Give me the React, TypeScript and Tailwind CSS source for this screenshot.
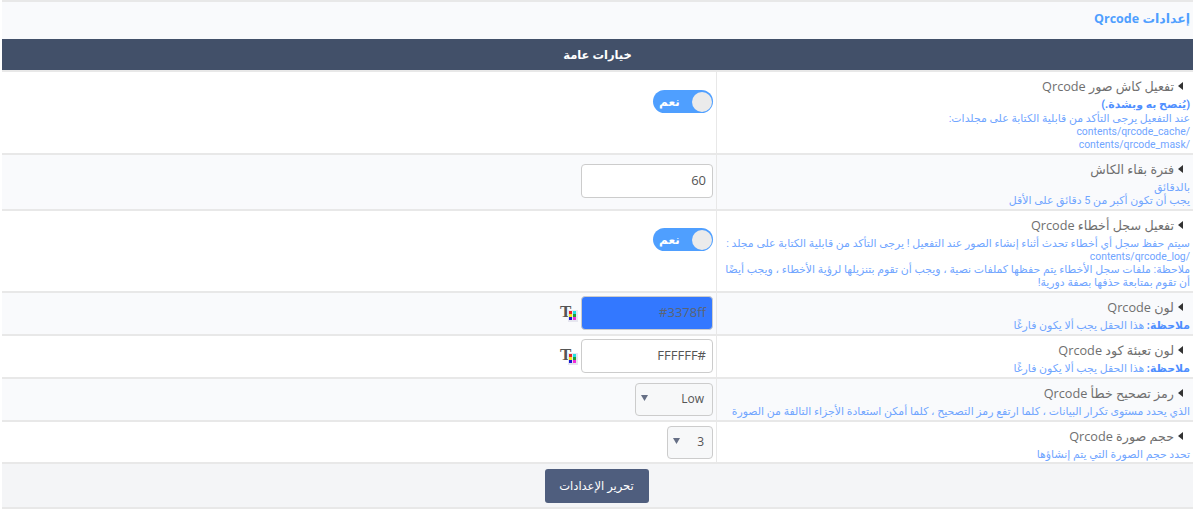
const font = { fontFamily: '"Open Sans", "DejaVu Sans", sans-serif' };
const descFont = { fontFamily: 'Roboto, "DejaVu Sans", sans-serif' };

function ColorIcon() {
  return (
    <div className="relative h-[17px] w-[18px] shrink-0" dir="ltr" aria-hidden="true">
      <span className="block font-['Liberation_Serif'] text-[17px] font-bold leading-[14px] text-[#555555]">T</span>
      <svg width="10" height="12" viewBox="0 0 10 12" className="absolute bottom-0 right-0">
        <rect width="10" height="12" fill="#e6e6f0" />
        <rect x="1" y="1" width="3" height="3" fill="#e8262a" />
        <rect x="5" y="1" width="3" height="3" fill="#22e0e0" />
        <rect x="1" y="4" width="3" height="3" fill="#f4e81e" />
        <rect x="5" y="4" width="3" height="3" fill="#1e9e3a" />
        <rect x="1" y="7" width="3" height="3" fill="#1a1ad0" />
        <rect x="5" y="7" width="3" height="3" fill="#f02bd8" />
      </svg>
    </div>
  );
}

function Toggle() {
  return (
    <div className="flex h-[23px] w-[60px] items-center justify-between rounded-full bg-[#4f9fff] pl-[6px] pr-px" dir="rtl">
      <span className="size-[20px] rounded-full bg-[#ebebeb]" />
      <span className="text-[12px] font-bold leading-none text-white">نعم</span>
    </div>
  );
}

function Field({ children, color }: { children: React.ReactNode; color?: boolean }) {
  return (
    <div className={`flex h-[34px] w-[132px] items-center rounded border border-[#cccccc] px-[6px] text-[13px] ${color ? "bg-[#3378ff] text-[#5b6472]" : "bg-white text-[#555555]"}`} dir="ltr">
      <span className="ml-auto">{children}</span>
    </div>
  );
}

function Select({ value, wide }: { value: string; wide?: boolean }) {
  return (
    <div className={`flex h-[33px] items-center justify-between rounded border border-[#cccccc] bg-[#f7f8f9] pb-[2px] pl-[5px] pr-2 text-[12px] text-[#555555] ${wide ? "w-[78px]" : "w-[46px]"}`}>
      <span>{value}</span>
      <svg width="8" height="7" viewBox="0 0 8 7" className="shrink-0" aria-hidden="true">
        <polygon points="0,0 7,0 3.5,6" fill="#666f85" />
      </svg>
    </div>
  );
}

function Path({ children }: { children: React.ReactNode }) {
  return <span className="text-[10.4px]">{children}</span>;
}

function Row({
  title,
  children,
  control,
  alt,
  height,
}: {
  title: string;
  children: React.ReactNode;
  control: React.ReactNode;
  alt?: boolean;
  height: string;
}) {
  return (
    <div className={`flex border-b-2 border-[#e8e8e8] ${alt ? "bg-[#f9fafc]" : "bg-white"} ${height}`}>
      <div className="w-[477px] shrink-0 border-l border-[#e8e8e8] pr-[3px] pt-[4px]">
        <div className="flex items-center gap-[4px] pr-[7px] text-[12.7px] leading-[20px] text-[#6f6f6f]">
          <svg width="5" height="8" viewBox="0 0 5 8" className="shrink-0" aria-hidden="true">
            <polygon points="5,0 5,8 0,4" fill="#333" />
          </svg>
          <span>{title}</span>
        </div>
        <div style={descFont} className="mt-[2px] whitespace-nowrap text-[10.9px] leading-[13px] text-[#70a5ff]">{children}</div>
      </div>
      <div className="flex-1 pr-[3px]">{control}</div>
    </div>
  );
}

const note = (
  <>
    <b className="text-[#4f8fff]">ملاحظة:</b> هذا الحقل يجب ألا يكون فارغًا
  </>
);

export default function App() {
  return (
    <div dir="rtl" style={font} className="h-[510px] w-[1195px] overflow-hidden bg-white">
      <div className="mx-[2px] h-[509px] border-y-2 border-[#e8e8e8] bg-[#f4f5f7]">
        <div className="flex h-[37px] items-center bg-[#f9fafc] pb-[2px] pr-[3px] text-[12.5px] font-bold text-[#4f9fff]">إعدادات Qrcode</div>
        <div className="flex h-[33px] items-center justify-center border-b-2 border-[#e8e8e8] bg-[#425069] text-[11.5px] font-bold text-white">خيارات عامة</div>

        <Row title="تفعيل كاش صور Qrcode" height="h-[83px]" control={<div className="pt-[18px]"><Toggle /></div>}>
          <b className="-mt-px block leading-[15px] text-[#4f8fff]">(يُنصح به وبشدة.)</b>
          عند التفعيل يرجى التأكد من قابلية الكتابة على مجلدات:
          <br />
          <Path>/contents/qrcode_cache</Path>
          <br />
          <Path>/contents/qrcode_mask</Path>
        </Row>

        <Row title="فترة بقاء الكاش" alt height="h-[56px]" control={<div className="pt-[9px]"><Field>60</Field></div>}>
          بالدقائق
          <br />
          يجب أن تكون أكبر من 5 دقائق على الأقل
        </Row>

        <Row title="تفعيل سجل أخطاء Qrcode" height="h-[82px]" control={<div className="pt-[17px]"><Toggle /></div>}>
          سيتم حفظ سجل أي أخطاء تحدث أثناء إنشاء الصور عند التفعيل ! يرجى التأكد من قابلية الكتابة على مجلد :
          <br />
          <Path>/contents/qrcode_log</Path>
          <br />
          ملاحظة: ملفات سجل الأخطاء يتم حفظها كملفات نصية ، ويجب أن تقوم بتنزيلها لرؤية الأخطاء ، ويجب أيضًا
          <br />
          أن تقوم بمتابعة حذفها بصفة دورية!
        </Row>

        <Row
          title="لون Qrcode"
          alt
          height="h-[43px]"
          control={
            <div className="flex items-center gap-[3px] pt-[3px]">
              <Field color>#3378ff</Field>
              <ColorIcon />
            </div>
          }
        >
          {note}
        </Row>

        <Row
          title="لون تعبئة كود Qrcode"
          height="h-[43px]"
          control={
            <div className="flex items-center gap-[3px] pt-[3px]">
              <Field>FFFFFF#</Field>
              <ColorIcon />
            </div>
          }
        >
          {note}
        </Row>

        <Row title="رمز تصحيح خطأ Qrcode" alt height="h-[43px]" control={<div className="pt-[4px]"><Select value="Low" wide /></div>}>
          الذي يحدد مستوى تكرار البيانات ، كلما ارتفع رمز التصحيح ، كلما أمكن استعادة الأجزاء التالفة من الصورة
        </Row>

        <Row title="حجم صورة Qrcode" height="h-[42px]" control={<div className="pt-[4px]"><Select value="3" /></div>}>
          تحدد حجم الصورة التي يتم إنشاؤها
        </Row>

        <div className="flex justify-center pr-[2px] pt-[5px]">
          <button className="h-[34px] w-[104px] rounded-[3px] bg-[#4f5e7e] text-[11.5px] text-white">تحرير الإعدادات</button>
        </div>
      </div>
    </div>
  );
}
